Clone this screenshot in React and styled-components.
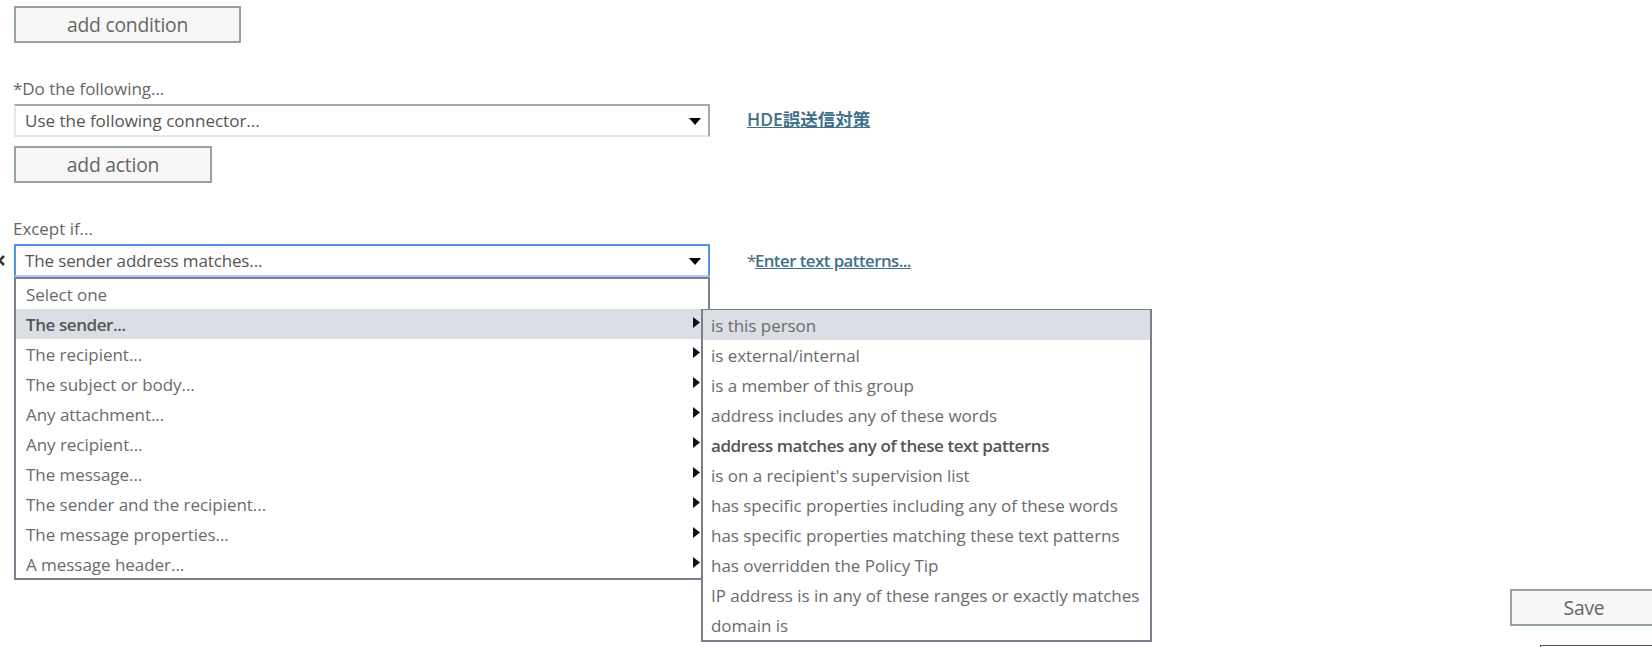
import React from "react";
import styled, { createGlobalStyle } from "styled-components";

const Global = createGlobalStyle`
  html, body { margin: 0; padding: 0; background: #fff; }
  body { font-family: "Open Sans", "Noto Sans CJK JP", sans-serif; }
`;

const Page = styled.div`
  position: relative;
  width: 1652px;
  height: 647px;
  overflow: hidden;
  box-sizing: border-box;
  padding: 6px 0 0 14px;
  display: flex;
  flex-direction: column;
  color: #666;
  font-size: 17px;
  letter-spacing: -0.04px;
`;

const ActionButton = styled.button`
  box-sizing: border-box;
  display: block;
  flex: none;
  width: ${(p) => p.$w}px;
  height: 37px;
  margin-top: ${(p) => p.$top || 0}px;
  padding: 0;
  border: 2px solid #96a3a3;
  background: #f7f7f7;
  color: #666;
  font: inherit;
  font-size: 19.3px;
  letter-spacing: -0.2px;
`;

const FieldLabel = styled.div`
  height: 24px;
  line-height: 24px;
  margin: 34px 0 3px -1px;
`;

const FieldRow = styled.div`
  display: flex;
  align-items: center;
  gap: 37px;
  position: relative;
`;

const Select = styled.div`
  box-sizing: border-box;
  width: 696px;
  height: 33px;
  display: flex;
  align-items: center;
  justify-content: space-between;
  padding: 0 7px 0 9px;
  color: #555;
  background: #fff;
  letter-spacing: ${(p) => (p.$focus ? -0.14 : 0)}px;
  border: 2px solid;
  border-color: ${(p) => (p.$focus ? "#4f94e8 #4f94e8 #a9cdf5 #4f94e8" : "#a6a8af #a6a8af #e4e8ee #e4e8ee")};
`;

const Caret = styled.svg`
  width: 12px;
  height: 7px;
  fill: #000;
  margin-top: 2px;
`;

const LinkLine = styled.div`
  color: #666;
  white-space: nowrap;
  letter-spacing: -1.5px;
  margin-bottom: ${(p) => (p.$raise ? 4 : 0)}px;
`;

const Link = styled.a`
  color: #41708a;
  font-weight: 600;
  text-decoration: underline;
  font-size: ${(p) => (p.$cjk ? 17.5 : 16.8)}px;
  letter-spacing: ${(p) => (p.$cjk ? 0 : -0.52)}px;
`;

const RemoveIcon = styled.svg`
  position: absolute;
  left: -20px;
  top: 11px;
  width: 11px;
  height: 11px;
  stroke: #333;
  stroke-width: 2.6;
`;

const Menu = styled.div`
  position: absolute;
  box-sizing: border-box;
  left: 14px;
  top: 277px;
  width: 696px;
  height: 303px;
  background: #fff;
  border: 2px solid #7a7f8c;
`;

const Submenu = styled.div`
  position: absolute;
  box-sizing: border-box;
  left: 701px;
  top: 309px;
  width: 451px;
  height: 333px;
  background: #fff;
  border: 2px solid #7a7f8c;
  border-top-width: 1px;
`;

const MenuItem = styled.div`
  position: relative;
  box-sizing: border-box;
  height: 30px;
  line-height: 31px;
  padding-left: ${(p) => p.$pad}px;
  white-space: nowrap;
  color: ${(p) => (p.$bold ? "#555" : "#6b6b6b")};
  font-weight: ${(p) => (p.$bold ? 600 : 400)};
  letter-spacing: ${(p) => (p.$bold ? -0.42 : -0.04)}px;
  background: ${(p) => (p.$active ? "#dbdfe5" : "transparent")};
`;

const Arrow = styled.svg`
  position: absolute;
  right: 8px;
  top: 8px;
  width: 7px;
  height: 11px;
  fill: #111;
`;

const SaveRow = styled.div`
  display: flex;
  justify-content: flex-end;
  margin: 312px -6px 0 0;
`;

const FooterEdge = styled.div`
  align-self: flex-end;
  box-sizing: border-box;
  width: 112px;
  height: 10px;
  margin: 19px 0 0;
  border: 1px solid #555;
  border-right: 0;
  border-bottom: 0;
  flex: none;
`;

const mainItems = [
  "Select one",
  "The sender...",
  "The recipient...",
  "The subject or body...",
  "Any attachment...",
  "Any recipient...",
  "The message...",
  "The sender and the recipient...",
  "The message properties...",
  "A message header...",
];

const subItems = [
  "is this person",
  "is external/internal",
  "is a member of this group",
  "address includes any of these words",
  "address matches any of these text patterns",
  "is on a recipient's supervision list",
  "has specific properties including any of these words",
  "has specific properties matching these text patterns",
  "has overridden the Policy Tip",
  "IP address is in any of these ranges or exactly matches",
  "domain is",
];

const CaretIcon = () => (
  <Caret viewBox="0 0 12 7">
    <path d="M0 0h12L6 7z" />
  </Caret>
);

export default function App() {
  return (
    <Page>
      <Global />
      <ActionButton $w={227}>add condition</ActionButton>
      <FieldLabel>*Do the following...</FieldLabel>
      <FieldRow>
        <Select>
          Use the following connector...
          <CaretIcon />
        </Select>
        <LinkLine $raise>
          <Link $cjk>HDE誤送信対策</Link>
        </LinkLine>
      </FieldRow>
      <ActionButton $w={198} $top={9}>add action</ActionButton>
      <FieldLabel>Except if...</FieldLabel>
      <FieldRow>
        <RemoveIcon viewBox="0 0 11 11">
          <path d="M1 1l9 9M10 1l-9 9" />
        </RemoveIcon>
        <Select $focus>
          The sender address matches...
          <CaretIcon />
        </Select>
        <LinkLine>
          *<Link>Enter text patterns...</Link>
        </LinkLine>
      </FieldRow>
      <Menu>
        {mainItems.map((t, i) => (
          <MenuItem key={t} $pad={10} $active={i === 1} $bold={i === 1}>
            {t}
            {i > 0 && (
              <Arrow viewBox="0 0 7 11">
                <path d="M0 0l7 5.5L0 11z" />
              </Arrow>
            )}
          </MenuItem>
        ))}
      </Menu>
      <Submenu>
        {subItems.map((t, i) => (
          <MenuItem key={t} $pad={8} $active={i === 0} $bold={i === 4}>
            {t}
          </MenuItem>
        ))}
      </Submenu>
      <SaveRow>
        <ActionButton $w={148}>Save</ActionButton>
      </SaveRow>
      <FooterEdge />
    </Page>
  );
}
